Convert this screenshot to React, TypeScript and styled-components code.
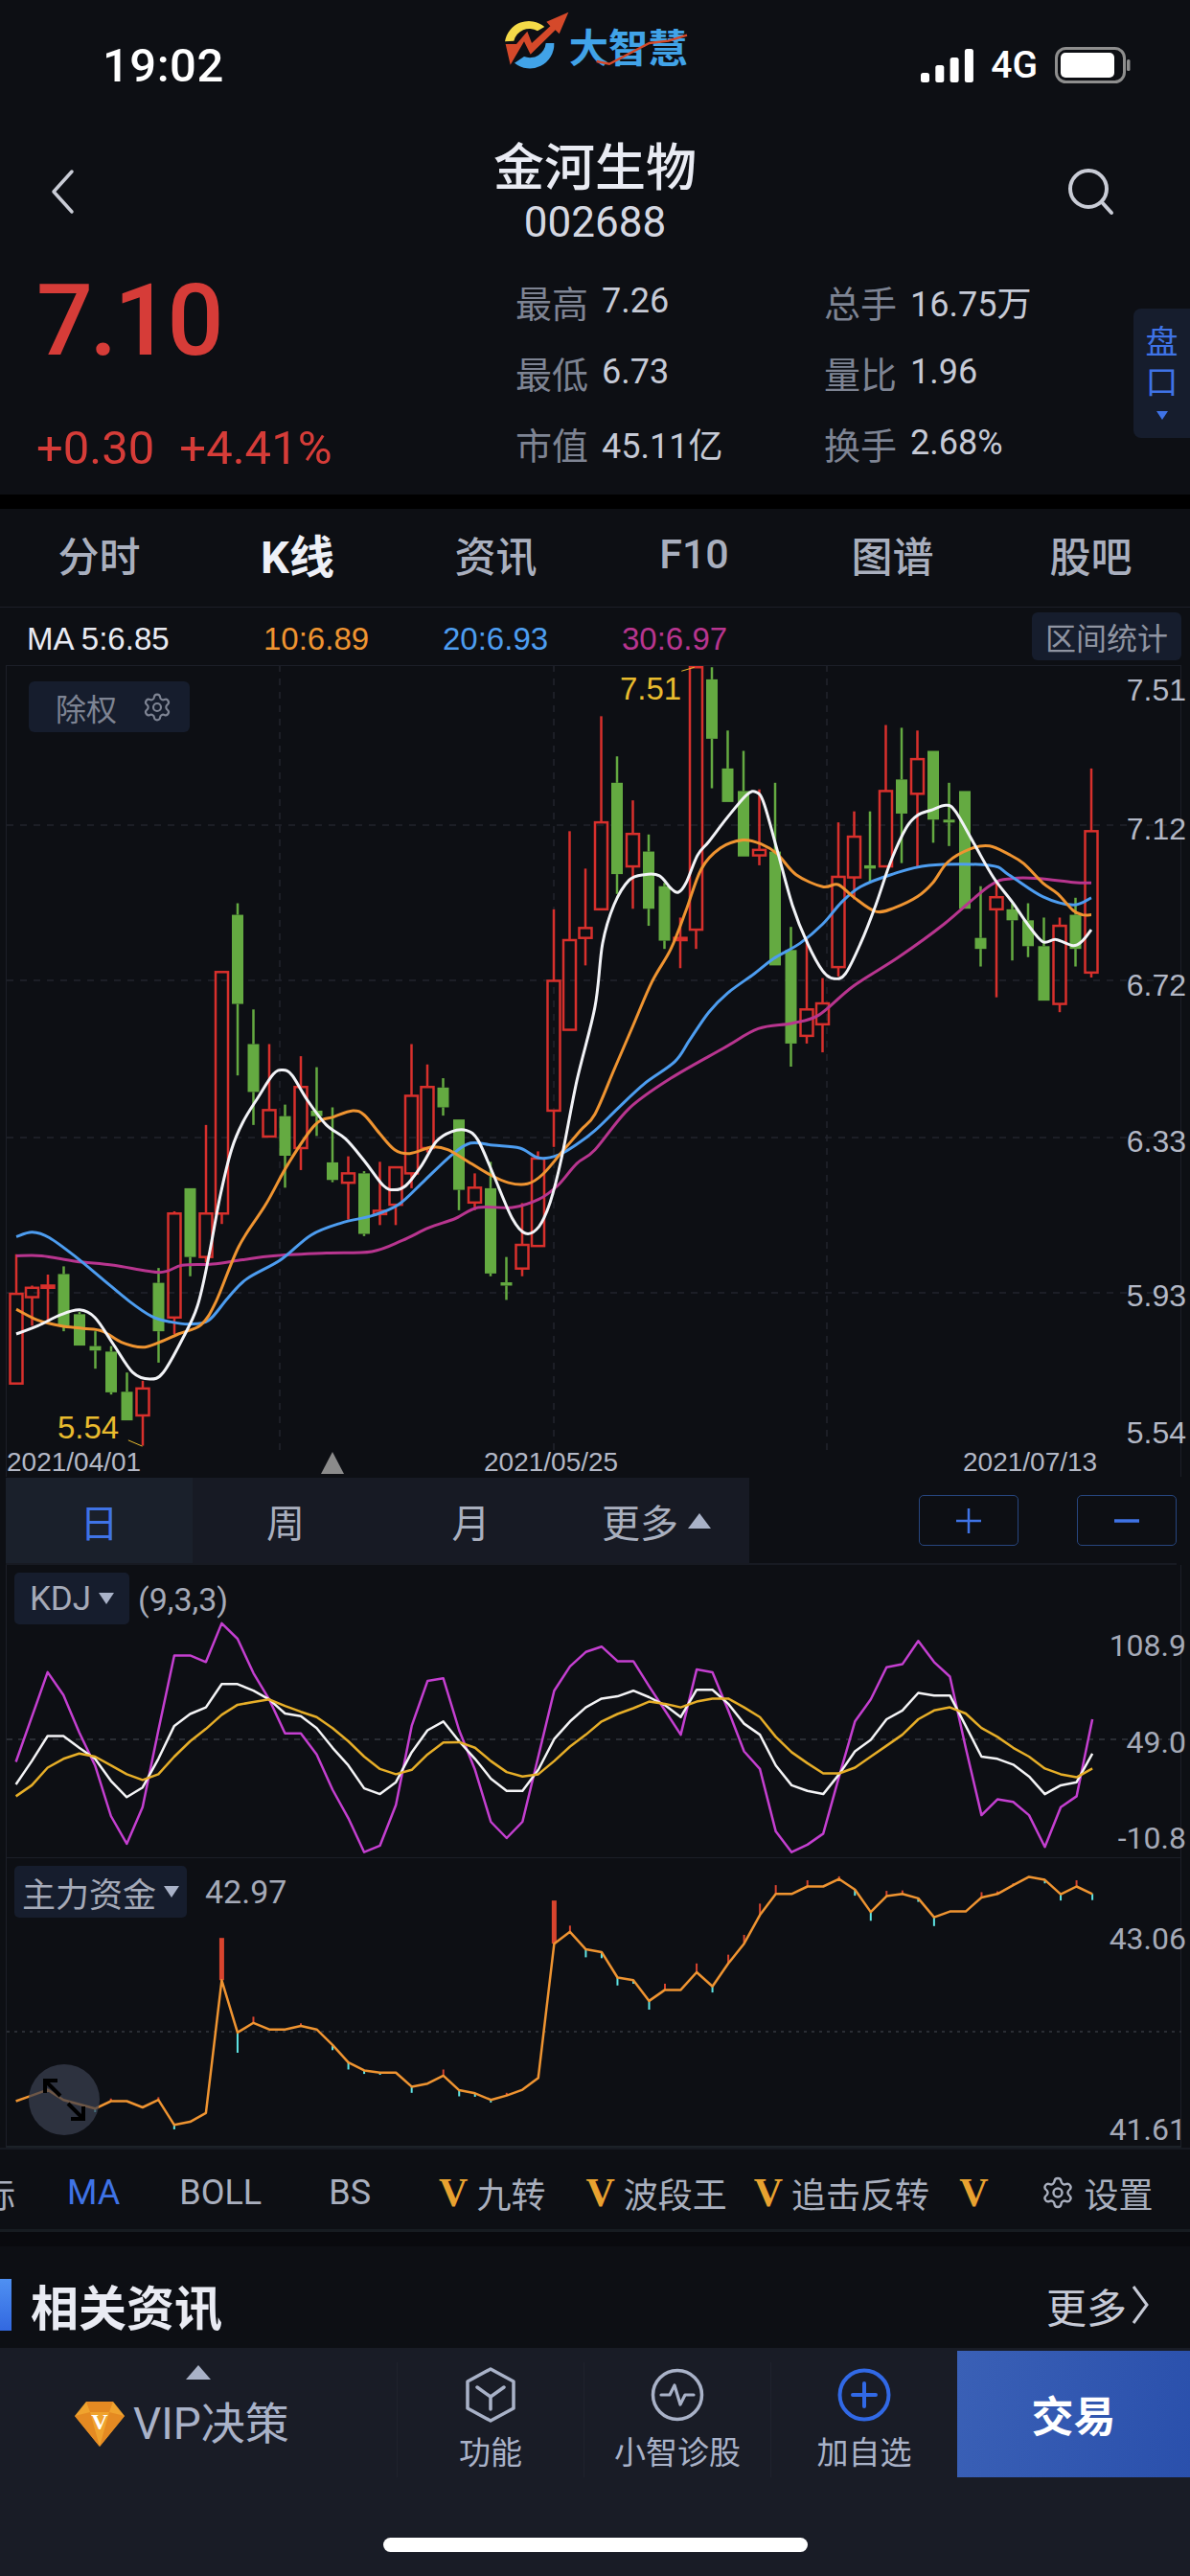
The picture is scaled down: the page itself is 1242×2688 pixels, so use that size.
import styled, { createGlobalStyle } from "styled-components";
import { Settings } from "lucide-react";

const BG = "#0d0f14";
const LABEL = "#a9afbe";
const SANS = `Roboto, "Noto Sans CJK SC", sans-serif`;
const ARIAL = `"Liberation Sans", "Noto Sans CJK SC", sans-serif`;

const GlobalStyle = createGlobalStyle`
  html, body {
    margin: 0;
    padding: 0;
    background: ${BG};
    font-family: ${SANS};
  }
`;

const Page = styled.div`
  width: 1242px;
  height: 2688px;
  overflow: hidden;
  background: ${BG};
  display: flex;
  flex-direction: column;
`;

const StatusBar = styled.div`
  height: 136px;
  display: grid;
  grid-template-columns: 1fr 220px 1fr;
  align-items: center;
  flex-shrink: 0;
`;

const Clock = styled.span`
  padding-left: 107px;
  color: #fff;
  font-size: 49px;
  font-weight: 500;
  letter-spacing: 0.5px;
`;

const Logo = styled.svg`
  align-self: start;
  width: 220px;
  height: 80px;
`;

const StatusIcons = styled.div`
  display: flex;
  justify-content: flex-end;
  align-items: center;
  padding-right: 62px;
  gap: 18px;
`;

const Network = styled.span`
  color: #fff;
  font-size: 39px;
  font-weight: 500;
`;

const NavBar = styled.div`
  height: 134px;
  display: flex;
  align-items: center;
  justify-content: space-between;
  padding: 0 78px 7px 52px;
  box-sizing: border-box;
  position: relative;
  flex-shrink: 0;
`;

const TitleBlock = styled.div`
  position: absolute;
  left: 0;
  right: 0;
  top: 9px;
  display: flex;
  flex-direction: column;
  align-items: center;
  color: #e9ebf3;
`;

const StockName = styled.div`
  font-size: 53px;
  font-weight: 500;
  line-height: 62px;
`;

const StockCode = styled.div`
  font-size: 44px;
  line-height: 50px;
  margin-top: 0;
  color: #d5d8e2;
`;

const Quote = styled.div`
  height: 246px;
  display: flex;
  position: relative;
  flex-shrink: 0;
`;

const PriceColumn = styled.div`
  width: 538px;
  padding: 15px 0 0 38px;
  box-sizing: border-box;
  color: #d63c38;
`;

const Price = styled.div`
  font-size: 104px;
  font-weight: 500;
  line-height: 100px;
  letter-spacing: -3.5px;
`;

const Change = styled.div`
  margin-top: 58px;
  font-size: 49px;
  line-height: 50px;
  display: flex;
  gap: 26px;
`;

const Stats = styled.div`
  padding-top: 7px;
  display: grid;
  grid-template-columns: 322px 300px;
  grid-auto-rows: 74px;
  align-items: center;
`;

const Stat = styled.div`
  display: flex;
  align-items: center;
  gap: 14px;
  white-space: nowrap;
`;

const StatLabel = styled.span`
  font-size: 38px;
  color: #7e8493;
`;

const StatValue = styled.span`
  font-size: 36px;
  color: #c6cad6;
`;

const HandicapTab = styled.div`
  position: absolute;
  right: 0;
  top: 52px;
  width: 59px;
  height: 135px;
  background: #161d2d;
  border-radius: 8px 0 0 8px;
  display: flex;
  flex-direction: column;
  align-items: center;
  color: #3f73e6;
  font-size: 34px;
  line-height: 42px;
  padding-top: 14px;
  box-sizing: border-box;
`;

const SmallDown = styled.div`
  margin-top: 9px;
  width: 0;
  height: 0;
  border-left: 6px solid transparent;
  border-right: 6px solid transparent;
  border-top: 9px solid #3f73e6;
`;

const Band = styled.div`
  height: 15px;
  background: #000;
  flex-shrink: 0;
`;

const Tabs = styled.div`
  height: 103px;
  display: grid;
  grid-template-columns: repeat(6, 207px);
  border-bottom: 1px solid #1c1f28;
  box-sizing: border-box;
  flex-shrink: 0;
`;

const Tab = styled.div<{ $active?: boolean }>`
  position: relative;
  display: flex;
  justify-content: center;
  align-items: center;
  padding-bottom: 9px;
  font-size: ${(p) => (p.$active ? 47 : 43)}px;
  font-weight: ${(p) => (p.$active ? 700 : 500)};
  color: ${(p) => (p.$active ? "#eef0f7" : LABEL)};

  ${(p) =>
    p.$active &&
    `
    ::after {
      content: "";
      position: absolute;
      bottom: 1px;
      left: 74px;
      width: 59px;
      height: 8px;
      border-radius: 4px;
      background: #e6e9f6;
    }
  `}
`;

const MaRow = styled.div`
  height: 60px;
  padding: 0 9px 0 28px;
  display: flex;
  align-items: center;
  position: relative;
  font-family: ${ARIAL};
  font-size: 33px;
  flex-shrink: 0;
`;

const MaValue = styled.span<{ $color: string; $width: number; $lift?: boolean }>`
  width: ${(p) => p.$width}px;
  padding-top: 5px;
  color: ${(p) => p.$color};
  font-weight: 400;
  white-space: nowrap;
`;

const RangeButton = styled.div`
  margin-left: auto;
  width: 156px;
  height: 50px;
  border-radius: 6px;
  background: #161d2d;
  color: #8f94a1;
  font-size: 32px;
  display: flex;
  align-items: center;
  justify-content: center;
`;

const ChartFrame = styled.div<{ $height: number }>`
  position: relative;
  height: ${(p) => p.$height}px;
  margin: 0 9px 0 6px;
  border-left: 1px solid #1c1f28;
  border-right: 1px solid #1c1f28;
  flex-shrink: 0;
`;

const ChartSvg = styled.svg`
  display: block;
  position: absolute;
  inset: 0;
`;

const Chip = styled.div`
  position: absolute;
  top: 17px;
  left: 23px;
  width: 168px;
  height: 53px;
  background: #161d2d;
  border-radius: 6px;
  color: #7e8493;
  font-size: 32px;
  display: flex;
  align-items: center;
  gap: 26px;
  padding-left: 28px;
  box-sizing: border-box;
`;

const AxisLabel = styled.span<{ $y: number }>`
  position: absolute;
  right: -6px;
  top: ${(p) => p.$y + 1}px;
  transform: translateY(-50%);
  font-family: ${ARIAL};
  font-size: 32px;
  color: #b3b8c6;
`;

const SubAxisLabel = styled.span<{ $y: number }>`
  position: absolute;
  right: -6px;
  top: ${(p) => p.$y}px;
  transform: translateY(-50%);
  font-size: 32px;
  color: #a5aab8;
`;

const Extreme = styled.span<{ $x: number; $y: number }>`
  position: absolute;
  left: ${(p) => p.$x}px;
  top: ${(p) => p.$y}px;
  transform: translateY(-50%);
  font-family: ${ARIAL};
  font-size: 33px;
  color: #e9bb2e;
`;

const DateLabel = styled.span<{ $x: number }>`
  position: absolute;
  left: ${(p) => p.$x}px;
  bottom: -1px;
  font-family: ${ARIAL};
  font-size: 28px;
  color: #b3b8c6;
`;

const PeriodRow = styled.div`
  height: 92px;
  margin: 0 14px 0 6px;
  padding-top: 1px;
  border-bottom: 2px solid #171a22;
  box-sizing: border-box;
  display: flex;
  align-items: stretch;
  flex-shrink: 0;
`;

const PeriodGroup = styled.div`
  width: 776px;
  background: #171a24;
  display: grid;
  grid-template-columns: 195px 194px 193px 194px;
`;

const Period = styled.div<{ $active?: boolean }>`
  display: flex;
  align-items: center;
  justify-content: center;
  gap: 10px;
  font-size: 40px;
  color: ${(p) => (p.$active ? "#3f73e6" : LABEL)};
  background: ${(p) => (p.$active ? "#1a202b" : "transparent")};
`;

const UpMark = styled.i<{ $w: number; $h: number }>`
  display: block;
  width: 0;
  height: 0;
  border-left: ${(p) => p.$w / 2}px solid transparent;
  border-right: ${(p) => p.$w / 2}px solid transparent;
  border-bottom: ${(p) => p.$h}px solid #a9b2c8;
`;

const ZoomButtons = styled.div`
  margin-left: auto;
  display: flex;
  align-items: center;
  gap: 61px;
`;

const ZoomButton = styled.div`
  width: 104px;
  height: 53px;
  border: 1px solid #27467f;
  border-radius: 5px;
  box-sizing: border-box;
  display: flex;
  align-items: center;
  justify-content: center;
`;

const PanelChip = styled.div<{ $top: number; $width: number }>`
  position: absolute;
  left: 8px;
  top: ${(p) => p.$top}px;
  width: ${(p) => p.$width}px;
  height: 54px;
  background: #161d2d;
  border-radius: 5px;
  color: #a5aab8;
  font-size: 35px;
  display: flex;
  align-items: center;
  justify-content: center;
  gap: 8px;
  box-sizing: border-box;
`;

const ChipCaret = styled.i`
  display: block;
  width: 0;
  height: 0;
  border-left: 8px solid transparent;
  border-right: 8px solid transparent;
  border-top: 12px solid #a9b2c8;
`;

const PanelValue = styled.span<{ $x: number; $top: number }>`
  position: absolute;
  left: ${(p) => p.$x}px;
  top: ${(p) => p.$top}px;
  transform: translateY(-50%);
  color: #a5aab8;
  font-size: 34px;
`;

const ExpandButton = styled.div`
  position: absolute;
  left: 23px;
  bottom: 13px;
  width: 74px;
  height: 74px;
  border-radius: 50%;
  background: rgba(58, 64, 80, 0.72);
  display: flex;
  align-items: center;
  justify-content: center;
`;

const IndicatorRow = styled.div`
  height: 88px;
  margin-left: -20px;
  padding-top: 6px;
  display: flex;
  align-items: center;
  border-top: 2px solid #171a22;
  border-bottom: 3px solid #171c21;
  box-sizing: border-box;
  width: 1262px;
  flex-shrink: 0;
  font-size: 36px;
  color: ${LABEL};
  white-space: nowrap;
`;

const Indicator = styled.span<{ $left: number; $active?: boolean }>`
  margin-left: ${(p) => p.$left}px;
  color: ${(p) => (p.$active ? "#3f73e6" : LABEL)};
  display: flex;
  align-items: center;
`;

const VipMark = styled.b`
  font-family: "Liberation Serif", serif;
  font-size: 42px;
  color: #e8a230;
  margin-right: 9px;
`;

const DarkBand = styled.div`
  height: 15px;
  background: #090a0e;
  flex-shrink: 0;
`;

const NewsHeader = styled.div`
  height: 106px;
  display: flex;
  align-items: center;
  padding: 16px 42px 0 0;
  box-sizing: border-box;
  flex-shrink: 0;
`;

const BlueBar = styled.div`
  width: 12px;
  height: 54px;
  background: linear-gradient(#4f90f2, #3268e0);
`;

const NewsTitle = styled.div`
  margin-left: 20px;
  font-size: 50px;
  font-weight: 700;
  color: #e9ebf3;
`;

const More = styled.div`
  margin-left: auto;
  display: flex;
  align-items: center;
  gap: 4px;
  font-size: 42px;
  color: #c6cad6;
`;

const BottomBar = styled.div`
  flex: 1;
  background: #191c26;
  padding-top: 3px;
  display: flex;
  flex-direction: column;
  align-items: center;
`;

const ActionRow = styled.div`
  width: 100%;
  height: 132px;
  display: flex;
  flex-shrink: 0;
`;

const VipDecision = styled.div`
  width: 414px;
  display: flex;
  flex-direction: column;
  align-items: center;
  padding: 15px 0 0 0;
  box-sizing: border-box;
`;

const VipLine = styled.div`
  align-self: flex-start;
  margin: 21px 0 0 78px;
  display: flex;
  align-items: center;
  gap: 9px;
  font-size: 46px;
  color: #a9b2c8;
  line-height: 50px;
`;

const Action = styled.div`
  width: 195px;
  margin-top: 12px;
  height: 120px;
  border-left: 1px solid #1f222d;
  box-sizing: border-box;
  display: flex;
  flex-direction: column;
  align-items: center;
  font-size: 33px;
  color: #a9b2c8;
  padding-top: 5px;
`;

const ActionText = styled.span`
  margin-top: 12px;
  line-height: 40px;
`;

const TradeButton = styled.div`
  flex: 1;
  background: linear-gradient(100deg, #3a60b6, #2a50ac);
  color: #fff;
  font-size: 44px;
  font-weight: 700;
  display: flex;
  align-items: center;
  justify-content: center;
`;

const HomeBar = styled.div`
  margin-top: 63px;
  width: 443px;
  height: 15px;
  border-radius: 8px;
  background: #fff;
`;

// [colour, high, body top, body bottom, low] in zoomed chart coordinates
type Candle = ["r" | "g", number, number, number, number];
const candles: Candle[] = [
  ["r", 1165, 1237, 1400, 1400], ["r", 1222, 1226, 1243, 1295], ["r", 1202, 1222, 1226, 1285],
  ["g", 1187, 1201, 1295, 1305], ["g", 1270, 1274, 1331, 1331], ["g", 1305, 1332, 1340, 1373],
  ["g", 1332, 1342, 1416, 1420], ["g", 1380, 1415, 1467, 1467], ["r", 1395, 1409, 1458, 1513],
  ["g", 1190, 1217, 1305, 1362], ["r", 1087, 1091, 1280, 1310], ["g", 1045, 1045, 1170, 1205],
  ["r", 930, 1091, 1170, 1180], ["r", 652, 652, 1091, 1110], ["g", 527, 548, 710, 840],
  ["g", 720, 783, 870, 930], ["r", 783, 903, 951, 951], ["g", 893, 914, 986, 1044],
  ["r", 805, 861, 972, 1012], ["g", 825, 904, 914, 950], ["g", 898, 998, 1030, 1034],
  ["r", 987, 1018, 1035, 1102], ["g", 1014, 1018, 1128, 1132], ["r", 997, 1086, 1092, 1112],
  ["r", 1007, 1007, 1075, 1112], ["r", 783, 877, 1018, 1045], ["r", 820, 861, 972, 980],
  ["g", 845, 862, 898, 913], ["g", 920, 920, 1048, 1085], ["r", 1018, 1044, 1071, 1085],
  ["g", 997, 1045, 1200, 1205], ["g", 1170, 1216, 1222, 1248], ["r", 1072, 1148, 1191, 1205],
  ["r", 978, 991, 1150, 1150], ["r", 538, 668, 904, 970], ["r", 396, 594, 757, 757],
  ["r", 464, 572, 590, 640], ["r", 187, 380, 538, 538], ["g", 260, 308, 474, 510],
  ["r", 340, 401, 460, 537], ["g", 402, 433, 537, 568], ["g", 490, 496, 595, 610],
  ["r", 553, 590, 594, 645], ["r", 98, 98, 575, 610], ["g", 98, 120, 228, 318],
  ["g", 213, 282, 343, 343], ["g", 250, 323, 442, 442], ["r", 320, 430, 440, 458],
  ["g", 308, 433, 640, 640], ["g", 570, 612, 782, 824], ["r", 587, 720, 768, 782],
  ["r", 663, 709, 747, 798], ["r", 380, 479, 643, 660], ["r", 360, 406, 480, 520],
  ["g", 360, 458, 464, 490], ["r", 203, 323, 460, 460], ["g", 208, 302, 364, 454],
  ["r", 213, 265, 328, 462], ["g", 250, 250, 375, 417], ["g", 308, 375, 380, 423],
  ["g", 323, 323, 537, 537], ["g", 496, 590, 610, 642], ["r", 490, 516, 538, 698],
  ["g", 527, 538, 558, 631], ["g", 527, 558, 605, 625], ["g", 553, 605, 704, 704],
  ["r", 553, 568, 710, 725], ["g", 517, 548, 610, 642], ["r", 282, 396, 653, 662],
];

type Pt = [number, number];
const R = 1568; // zoom x offset of the right half of the chart
const shift = (pts: Pt[]): Pt[] => pts.map(([x, y]) => [x + R, y]);

const ma5: Pt[] = [
  [43, 1310], [100, 1295], [160, 1275], [210, 1266], [250, 1280], [300, 1330], [350, 1380], [395, 1392], [430, 1380], [480, 1320],
  [520, 1260], [550, 1170], [580, 1060], [610, 975], [640, 925], [680, 880], [720, 838], [745, 830], [770, 840], [810, 885],
  [860, 930], [910, 955], [960, 995], [1010, 1040], [1040, 1048], [1070, 1040], [1110, 1005], [1150, 960], [1190, 942], [1230, 940],
  [1260, 958], [1300, 1020], [1350, 1100], [1385, 1127], [1420, 1115], [1450, 1070], [1480, 990], [1520, 850],
  ...shift([
    [0, 715], [20, 600], [50, 530], [90, 485], [130, 475], [170, 477], [200, 500], [220, 507], [240, 490], [270, 440], [300, 415],
    [350, 370], [400, 330], [425, 325], [445, 345], [480, 430], [520, 530], [560, 600], [600, 650], [630, 664], [660, 655], [700, 600],
    [740, 530], [780, 450], [820, 390], [850, 367], [885, 358], [925, 349], [950, 360], [1000, 420], [1050, 480], [1100, 525],
    [1140, 565], [1180, 597], [1215, 593], [1260, 604], [1285, 595], [1308, 575],
  ]),
];

const ma10: Pt[] = [
  [43, 1265], [100, 1285], [160, 1295], [220, 1300], [270, 1305], [320, 1325], [375, 1334], [420, 1325], [470, 1310], [530, 1293],
  [570, 1250], [630, 1150], [700, 1075], [760, 1000], [830, 930], [880, 915], [930, 904], [960, 912], [1000, 945], [1040, 975],
  [1080, 982], [1140, 970], [1180, 975], [1230, 995], [1290, 1020], [1340, 1035], [1390, 1037], [1430, 1020], [1480, 980], [1530, 940],
  ...shift([
    [0, 910], [50, 830], [100, 750], [150, 670], [200, 610], [240, 540], [280, 465], [330, 427], [390, 412], [440, 420], [480, 437],
    [530, 475], [600, 497], [640, 493], [680, 515], [740, 542], [790, 535], [850, 515], [890, 490], [930, 452], [990, 428], [1040, 423],
    [1090, 438], [1130, 455], [1180, 490], [1220, 510], [1260, 540], [1285, 548], [1308, 548],
  ]),
];

const ma20: Pt[] = [
  [43, 1133], [85, 1125], [130, 1135], [200, 1170], [270, 1210], [340, 1250], [400, 1278], [450, 1288], [500, 1292], [550, 1285],
  [600, 1245], [650, 1210], [740, 1175], [820, 1130], [900, 1108], [980, 1095], [1050, 1075], [1120, 1030], [1190, 985], [1240, 963],
  [1300, 967], [1370, 972], [1420, 990], [1470, 985], [1520, 965],
  ...shift([
    [0, 940], [60, 900], [130, 855], [210, 815], [250, 775], [300, 725], [350, 690], [420, 655], [470, 628], [540, 600], [600, 565],
    [650, 525], [700, 497], [780, 475], [880, 458], [1040, 458], [1090, 475], [1180, 515], [1260, 530], [1308, 517],
  ]),
];

const ma30: Pt[] = [
  [43, 1168], [110, 1168], [200, 1178], [300, 1185], [420, 1198], [480, 1185], [560, 1183], [640, 1175], [720, 1168], [860, 1163],
  [980, 1160], [1060, 1140], [1130, 1117], [1200, 1100], [1260, 1080], [1350, 1080], [1420, 1065], [1470, 1040], [1520, 1000],
  ...shift([
    [0, 975], [90, 900], [200, 845], [340, 790], [430, 755], [520, 745], [590, 730], [680, 678], [800, 625], [920, 565], [1040, 495],
    [1100, 482], [1170, 482], [1260, 489], [1308, 490],
  ]),
];

// values are y per bar, in the zoomed panel coordinates
const kdjJ = [672, 570, 468, 520, 605, 680, 795, 858, 775, 600, 430, 430, 445, 357, 392, 470, 530, 607, 607, 655, 735, 800, 877, 862, 770, 590, 488, 482, 600, 690, 808, 845, 808, 660, 510, 455, 422, 410, 443, 443, 500, 555, 610, 462, 468, 555, 648, 688, 830, 877, 860, 835, 705, 580, 530, 457, 450, 397, 445, 478, 640, 793, 757, 763, 793, 865, 775, 750, 575];
const kdjK = [723, 670, 613, 613, 640, 665, 715, 752, 730, 665, 590, 563, 548, 495, 495, 510, 530, 562, 568, 595, 640, 680, 732, 745, 718, 650, 600, 580, 625, 665, 710, 738, 738, 690, 620, 580, 548, 528, 523, 510, 525, 543, 570, 508, 508, 540, 585, 610, 680, 725, 738, 745, 700, 648, 622, 575, 555, 515, 521, 521, 590, 660, 665, 678, 705, 745, 725, 718, 653];
const kdjD = [750, 725, 685, 665, 653, 660, 680, 700, 713, 700, 660, 625, 597, 565, 542, 536, 530, 545, 558, 570, 595, 625, 660, 688, 700, 690, 655, 628, 627, 640, 670, 695, 705, 700, 670, 637, 610, 580, 563, 550, 535, 540, 548, 535, 528, 528, 548, 570, 615, 650, 675, 698, 698, 685, 660, 635, 610, 575, 555, 548, 562, 595, 615, 640, 660, 687, 700, 707, 687];
const fund = [1443, 1430, 1417, 1440, 1450, 1460, 1443, 1443, 1457, 1440, 1497, 1490, 1470, 1168, 1287, 1265, 1280, 1280, 1272, 1280, 1315, 1355, 1373, 1378, 1378, 1410, 1403, 1385, 1418, 1425, 1440, 1430, 1417, 1390, 1085, 1058, 1098, 1104, 1162, 1168, 1215, 1190, 1190, 1150, 1182, 1130, 1085, 1020, 972, 972, 955, 955, 938, 962, 1013, 977, 972, 982, 1025, 1012, 1012, 980, 972, 952, 933, 940, 973, 955, 972];

// bar index -> tick length on the fund line
const fundRed: Record<number, number> = { 6: 6, 9: 6, 13: 96, 15: 14, 18: 6, 27: 14, 31: 6, 33: 8, 34: 98, 35: 14, 41: 14, 43: 20, 45: 20, 46: 20, 47: 26, 48: 20, 50: 14, 52: 6, 55: 12, 56: 8, 61: 12, 62: 6, 67: 14, 63: 4 };
const fundCyan: Record<number, number> = { 5: 8, 10: 10, 14: 46, 20: 12, 21: 16, 22: 8, 23: 5, 25: 14, 28: 14, 29: 8, 30: 6, 36: 18, 37: 14, 38: 18, 39: 8, 40: 20, 44: 14, 53: 14, 54: 20, 57: 8, 58: 20, 65: 8, 66: 14, 68: 14 };

const kx = (x: number) => x / 2.525;
const ky = (y: number) => 640 + y / 1.742;
const barX = (i: number) => (21 + 20.85 * i) / 1.262;
const subY = (y: number) => 1530 + y / 2.178;

// catmull-rom through the points, the MA lines are smooth in the app
const smooth = (pts: Pt[]) => {
  const p = pts.map(([x, y]): Pt => [kx(x), ky(y)]);
  let d = `M${p[0][0].toFixed(1)} ${p[0][1].toFixed(1)}`;
  for (let i = 0; i < p.length - 1; i++) {
    const a = p[i - 1] || p[i];
    const b = p[i];
    const c = p[i + 1];
    const e = p[i + 2] || c;
    const c1x = b[0] + (c[0] - a[0]) / 6;
    const c1y = b[1] + (c[1] - a[1]) / 6;
    const c2x = c[0] - (e[0] - b[0]) / 6;
    const c2y = c[1] - (e[1] - b[1]) / 6;
    d += `C${c1x.toFixed(1)} ${c1y.toFixed(1)} ${c2x.toFixed(1)} ${c2y.toFixed(1)} ${c[0].toFixed(1)} ${c[1].toFixed(1)}`;
  }
  return d;
};

const bars = (ys: number[]) => ys.map((y, i) => `${barX(i).toFixed(1)},${subY(y).toFixed(1)}`).join(" ");

const RED = "#d8302c";
const GREEN = "#64aa41";
const GRID = "#22252d";

const KChart = () => (
  <ChartSvg width={1226} height={847} viewBox="7 694 1226 847">
    <g stroke={GRID} strokeWidth={1.5} strokeDasharray="7 7" fill="none">
      {[861, 1023, 1187, 1349].map((y) => <line key={y} x1={7} x2={1233} y1={y} y2={y} />)}
      {[292, 578, 863].map((x) => <line key={x} x1={x} x2={x} y1={694} y2={1515} />)}
    </g>
    <line x1={7} x2={1233} y1={694.5} y2={694.5} stroke="#1c1f28" />
    {candles.map(([c, hi, top, bot, lo], i) => {
      const x = 17 + 16.5 * i;
      const color = c === "r" ? RED : GREEN;
      const y1 = ky(top);
      const y2 = ky(bot);
      return (
        <g key={i}>
          <line x1={x} x2={x} y1={ky(hi)} y2={y1} stroke={color} strokeWidth={2.5} />
          <line x1={x} x2={x} y1={y2} y2={ky(lo)} stroke={color} strokeWidth={2.5} />
          {c === "r"
            ? <rect x={x - 6.5} y={y1} width={13} height={y2 - y1} fill="none" stroke={color} strokeWidth={2.5} />
            : <rect x={x - 6} y={y1} width={12} height={Math.max(y2 - y1, 3)} fill={color} />}
        </g>
      );
    })}
    <g fill="none" strokeWidth={3}>
      <path d={smooth(ma30)} stroke="#b8358f" />
      <path d={smooth(ma20)} stroke="#4d9df0" />
      <path d={smooth(ma10)} stroke="#ef9431" />
      <path d={smooth(ma5)} stroke="#f2f3f7" strokeWidth={3} />
    </g>
    <path d={`M${kx(338)} ${ky(1503)}L${kx(375)} ${ky(1514)}`} stroke="#e9bb2e" strokeWidth={1} fill="none" />
    <path d={`M${kx(228 + R)} ${ky(105)}L${kx(262 + R)} ${ky(98)}`} stroke="#e9bb2e" strokeWidth={1} fill="none" />
    <path d="M347 1515L359 1538H335Z" fill="#8b8b8b" />
  </ChartSvg>
);

const KdjChart = () => (
  <ChartSvg width={1226} height={306} viewBox="7 1633 1226 306">
    <line x1={7} x2={1233} y1={1815} y2={1815} stroke="#2a2d34" strokeWidth={2} strokeDasharray="6 6" />
    <g fill="none" strokeLinejoin="round">
      <polyline points={bars(kdjJ)} stroke="#c43fd0" strokeWidth={2.5} />
      <polyline points={bars(kdjK)} stroke="#f4f4f6" strokeWidth={2.5} />
      <polyline points={bars(kdjD)} stroke="#e6ae28" strokeWidth={2.5} />
    </g>
    <line x1={7} x2={1233} y1={1938.5} y2={1938.5} stroke="#1c1f28" />
  </ChartSvg>
);

const FundChart = () => (
  <ChartSvg width={1226} height={302} viewBox="7 1939 1226 302">
    <line x1={7} x2={1233} y1={2120} y2={2120} stroke="#2a2d34" strokeWidth={2} strokeDasharray="3 5" />
    {Object.entries(fundRed).map(([k, len]) => {
      const i = Number(k);
      return (
        <line key={k} x1={barX(i)} x2={barX(i)} y1={subY(fund[i])} y2={subY(fund[i] - len)} stroke="#d8442e" strokeWidth={len > 50 ? 5 : 2} />
      );
    })}
    {Object.entries(fundCyan).map(([k, len]) => {
      const i = Number(k);
      return (
        <line key={k} x1={barX(i)} x2={barX(i)} y1={subY(fund[i])} y2={subY(fund[i] + len)} stroke="#5fe6e6" strokeWidth={2} />
      );
    })}
    <polyline points={bars(fund)} fill="none" stroke="#ef9431" strokeWidth={2.5} strokeLinejoin="round" />
    <line x1={7} x2={1233} y1={2240} y2={2240} stroke="#1c2228" strokeWidth={2} />
  </ChartSvg>
);

const LogoMark = () => (
  <Logo viewBox="0 0 660 240">
    <path d="M48 130A76 76 0 0 1 172 84L150 97A50 50 0 0 0 76 128Z" fill="#f4da48" />
    <path d="M202 135A76 76 0 0 1 78 197L108 177A50 50 0 0 0 176 135Z" fill="#41a3e8" />
    <text x="248" y="196" fontFamily={`"Noto Sans CJK SC", sans-serif`} fontWeight={700} fontSize="124" fill="#41a3e8">大智慧</text>
    <path d="M50 138L84 138L118 98L132 135L190 82L178 68L247 38L218 106L206 94L128 170L108 130L65 203Z" fill="#d5492a" />
    <path d="M335 192L375 200L500 135L560 128L618 110" stroke="#d5492a" strokeWidth={7} fill="none" />
  </Logo>
);

const SignalBars = () => (
  <svg width={55} height={36} viewBox="0 0 55 36">
    {[10, 18, 26, 35].map((h, i) => (
      <rect key={h} x={i * 15.3} y={36 - h} width={9} height={h} rx={2.5} fill="#fff" />
    ))}
  </svg>
);

const Battery = () => (
  <svg width={79} height={38} viewBox="0 0 79 38">
    <rect x={1.5} y={1.5} width={71} height={35} rx={10} fill="none" stroke="#8e8e8e" strokeWidth={3} />
    <rect x={6} y={6} width={56} height={26} rx={5} fill="#fff" />
    <rect x={75} y={13} width={3.5} height={12} rx={1.5} fill="#8e8e8e" />
  </svg>
);

const BackIcon = () => (
  <svg width={26} height={48} viewBox="0 0 26 48">
    <path d="M23 3L4 24L23 45" fill="none" stroke="#c9ccd6" strokeWidth={3.5} strokeLinecap="round" strokeLinejoin="round" />
  </svg>
);

const SearchIcon = () => (
  <svg width={52} height={50} viewBox="0 0 52 50">
    <circle cx={24} cy={22} r={19} fill="none" stroke="#c9ccd6" strokeWidth={4} />
    <path d="M38 36L48 47" stroke="#c9ccd6" strokeWidth={4} strokeLinecap="round" />
  </svg>
);

const ExpandIcon = () => (
  <svg width={48} height={48} viewBox="0 0 48 48">
    <path d="M4 17V4H17M4 4L20 20M44 31V44H31M44 44L28 28" fill="none" stroke="#000" strokeWidth={4} />
  </svg>
);

const Diamond = () => (
  <svg width={52} height={48} viewBox="0 0 52 48">
    <path d="M12 1H40L52 16L26 48L0 16Z" fill="#f0a32e" />
    <path d="M12 1H40L36 12H16ZM0 16L16 12L26 48ZM52 16L36 12L26 48Z" fill="#e58a22" />
    <text x="26" y="30" textAnchor="middle" fontFamily={`"Liberation Serif", serif`} fontWeight={700} fontSize="24" fill="#fff">V</text>
  </svg>
);

const FunctionIcon = () => (
  <svg width={54} height={58} viewBox="0 0 54 58">
    <path d="M27 2L51 15V43L27 56L3 43V15Z" fill="none" stroke="#a9b2c8" strokeWidth={3.5} strokeLinejoin="round" />
    <path d="M13 21L27 31L41 21M27 31V44" fill="none" stroke="#a9b2c8" strokeWidth={3.5} strokeLinecap="round" strokeLinejoin="round" />
  </svg>
);

const DiagnoseIcon = () => (
  <svg width={56} height={58} viewBox="0 0 56 58">
    <circle cx={28} cy={29} r={25.5} fill="none" stroke="#a9b2c8" strokeWidth={3.5} />
    <path d="M11 29H20L25 19L31 39L36 29H45" fill="none" stroke="#a9b2c8" strokeWidth={3.2} strokeLinecap="round" strokeLinejoin="round" />
  </svg>
);

const AddIcon = () => (
  <svg width={56} height={58} viewBox="0 0 56 58">
    <circle cx={28} cy={29} r={25.5} fill="none" stroke="#3169e6" strokeWidth={4} />
    <path d="M28 17V41M16 29H40" fill="none" stroke="#3169e6" strokeWidth={4} strokeLinecap="round" />
  </svg>
);

const PlusMinus = ({ minus }: { minus?: boolean }) => (
  <svg width={30} height={30} viewBox="0 0 30 30">
    <path d={minus ? "M2 15H28" : "M2 15H28M15 2V28"} stroke="#3f73e6" strokeWidth={minus ? 3.5 : 2.5} />
  </svg>
);

const App = () => {
  const indicators = [
    { left: 54, text: "MA", active: true },
    { left: 62, text: "BOLL" },
    { left: 70, text: "BS" },
  ];
  const vip = [
    { left: 71, text: "九转" },
    { left: 42, text: "波段王" },
    { left: 28, text: "追击反转" },
    { left: 31, text: "" },
  ];

  return (
    <Page>
      <GlobalStyle />
      <StatusBar>
        <Clock>19:02</Clock>
        <LogoMark />
        <StatusIcons>
          <SignalBars />
          <Network>4G</Network>
          <Battery />
        </StatusIcons>
      </StatusBar>

      <NavBar>
        <BackIcon />
        <TitleBlock>
          <StockName>金河生物</StockName>
          <StockCode>002688</StockCode>
        </TitleBlock>
        <SearchIcon />
      </NavBar>

      <Quote>
        <PriceColumn>
          <Price>7.10</Price>
          <Change>
            <span>+0.30</span>
            <span>+4.41%</span>
          </Change>
        </PriceColumn>
        <Stats>
          <Stat><StatLabel>最高</StatLabel><StatValue>7.26</StatValue></Stat>
          <Stat><StatLabel>总手</StatLabel><StatValue>16.75万</StatValue></Stat>
          <Stat><StatLabel>最低</StatLabel><StatValue>6.73</StatValue></Stat>
          <Stat><StatLabel>量比</StatLabel><StatValue>1.96</StatValue></Stat>
          <Stat><StatLabel>市值</StatLabel><StatValue>45.11亿</StatValue></Stat>
          <Stat><StatLabel>换手</StatLabel><StatValue>2.68%</StatValue></Stat>
        </Stats>
        <HandicapTab>
          盘<br />口
          <SmallDown />
        </HandicapTab>
      </Quote>

      <Band />

      <Tabs>
        <Tab>分时</Tab>
        <Tab $active>K线</Tab>
        <Tab>资讯</Tab>
        <Tab>F10</Tab>
        <Tab>图谱</Tab>
        <Tab>股吧</Tab>
      </Tabs>

      <MaRow>
        <MaValue $color="#e9ebf3" $width={247}>MA 5:6.85</MaValue>
        <MaValue $color="#ef9431" $width={187}>10:6.89</MaValue>
        <MaValue $color="#4d9df0" $width={187}>20:6.93</MaValue>
        <MaValue $color="#b8358f" $width={187}>30:6.97</MaValue>
        <RangeButton>区间统计</RangeButton>
      </MaRow>

      <ChartFrame $height={847}>
        <KChart />
        <Chip>除权<Settings size={32} strokeWidth={1.6} color="#7e8493" /></Chip>
        <AxisLabel $y={25}>7.51</AxisLabel>
        <AxisLabel $y={170}>7.12</AxisLabel>
        <AxisLabel $y={333}>6.72</AxisLabel>
        <AxisLabel $y={496}>6.33</AxisLabel>
        <AxisLabel $y={657}>5.93</AxisLabel>
        <AxisLabel $y={800}>5.54</AxisLabel>
        <Extreme $x={640} $y={25}>7.51</Extreme>
        <Extreme $x={53} $y={796}>5.54</Extreme>
        <DateLabel $x={0}>2021/04/01</DateLabel>
        <DateLabel $x={498}>2021/05/25</DateLabel>
        <DateLabel $x={998}>2021/07/13</DateLabel>
      </ChartFrame>

      <PeriodRow>
        <PeriodGroup>
          <Period $active>日</Period>
          <Period>周</Period>
          <Period>月</Period>
          <Period>更多<UpMark $w={24} $h={16} /></Period>
        </PeriodGroup>
        <ZoomButtons>
          <ZoomButton><PlusMinus /></ZoomButton>
          <ZoomButton><PlusMinus minus /></ZoomButton>
        </ZoomButtons>
      </PeriodRow>

      <ChartFrame $height={306}>
        <KdjChart />
        <PanelChip $top={8} $width={120}>KDJ<ChipCaret /></PanelChip>
        <PanelValue $x={137} $top={36}>(9,3,3)</PanelValue>
        <SubAxisLabel $y={84}>108.9</SubAxisLabel>
        <SubAxisLabel $y={185}>49.0</SubAxisLabel>
        <SubAxisLabel $y={285}>-10.8</SubAxisLabel>
      </ChartFrame>

      <ChartFrame $height={302}>
        <FundChart />
        <PanelChip $top={8} $width={180}>主力资金<ChipCaret /></PanelChip>
        <PanelValue $x={207} $top={35}>42.97</PanelValue>
        <SubAxisLabel $y={84}>43.06</SubAxisLabel>
        <SubAxisLabel $y={283}>41.61</SubAxisLabel>
        <ExpandButton><ExpandIcon /></ExpandButton>
      </ChartFrame>

      <IndicatorRow>
        <Indicator $left={0}>标</Indicator>
        {indicators.map((item) => (
          <Indicator key={item.text} $left={item.left} $active={item.active}>{item.text}</Indicator>
        ))}
        {vip.map((item) => (
          <Indicator key={item.left} $left={item.left}><VipMark>V</VipMark>{item.text}</Indicator>
        ))}
        <Indicator $left={46}><Settings size={36} strokeWidth={1.6} />&nbsp;设置</Indicator>
      </IndicatorRow>

      <DarkBand />

      <NewsHeader>
        <BlueBar />
        <NewsTitle>相关资讯</NewsTitle>
        <More>更多
          <svg width={20} height={44} viewBox="0 0 20 44">
            <path d="M3 3L17 22L3 41" fill="none" stroke="#c6cad6" strokeWidth={3} />
          </svg>
        </More>
      </NewsHeader>

      <BottomBar>
        <ActionRow>
          <VipDecision>
            <UpMark $w={27} $h={15} />
            <VipLine><Diamond />VIP决策</VipLine>
          </VipDecision>
          <Action><FunctionIcon /><ActionText>功能</ActionText></Action>
          <Action><DiagnoseIcon /><ActionText>小智诊股</ActionText></Action>
          <Action><AddIcon /><ActionText>加自选</ActionText></Action>
          <TradeButton>交易</TradeButton>
        </ActionRow>
        <HomeBar />
      </BottomBar>
    </Page>
  );
};

export default App;
